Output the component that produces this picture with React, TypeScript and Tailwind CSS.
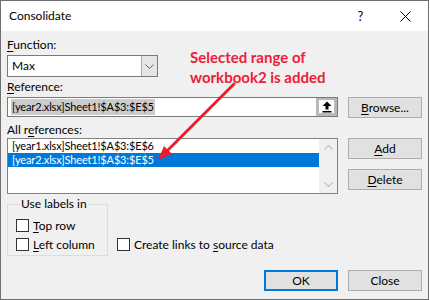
import type { ReactNode } from 'react'

function Key({ children }: { children: ReactNode }) {
  return <span className="underline decoration-1 underline-offset-2">{children}</span>
}

function Button({ children, isDefault = false }: { children: ReactNode; isDefault?: boolean }) {
  return (
    <div
      className={
        isDefault
          ? 'flex h-[21px] w-[74px] items-center justify-center border-2 border-[#0078d7] bg-[#e1e1e1]'
          : 'flex h-[21px] w-[74px] items-center justify-center border border-[#adadad] bg-[#e1e1e1]'
      }
    >
      {children}
    </div>
  )
}

function CheckRow({ children }: { children: ReactNode }) {
  return (
    <div className="flex h-[19px] items-center gap-[4px] whitespace-nowrap">
      <div className="h-[13px] w-[13px] border border-[#333333] bg-white" />
      <span>{children}</span>
    </div>
  )
}

function ChevronDown() {
  return (
    <svg width="9" height="5" viewBox="0 0 9 5" fill="none" stroke="#606060" strokeWidth="1">
      <path d="M0.5 0.5 L4.5 4.5 L8.5 0.5" />
    </svg>
  )
}

function CollapseIcon() {
  return (
    <svg width="10" height="12" viewBox="0 0 10 12" fill="#000">
      <path d="M5 0.5 L9.5 5 L6.5 5 L6.5 8.5 L3.5 8.5 L3.5 5 L0.5 5 Z" />
      <rect x="0.5" y="10" width="9" height="1.5" />
    </svg>
  )
}

export default function App() {
  return (
    <div className="relative h-[300px] w-[429px] overflow-hidden border border-[#6f6f6f] bg-[#f0f0f0] font-['Lato',sans-serif] text-[12px] leading-[16px] text-black">
      {/* title bar */}
      <div className="flex h-[30px] items-center bg-white pl-[8px]">
        <span className="flex-1">Consolidate</span>
        <span className="w-[45px] text-center text-[13px]">?</span>
        <div className="flex w-[45px] justify-center">
          <svg width="11" height="11" viewBox="0 0 11 11" stroke="#000" strokeWidth="1">
            <path d="M0.5 0.5 L10.5 10.5 M10.5 0.5 L0.5 10.5" />
          </svg>
        </div>
      </div>

      <div className="px-[6px]">
        <div className="mt-[6px] h-[16px]">
          <Key>F</Key>unction:
        </div>
        <div className="mt-[2px] flex h-[22px] w-[151px] border border-[#7a7a7a] bg-white">
          <div className="flex flex-1 items-center pl-[4px]">Max</div>
          <div className="flex w-[16px] items-center justify-center border-l border-[#adadad] bg-[#e5e5e5]">
            <ChevronDown />
          </div>
        </div>

        <div className="mt-[2px] h-[16px]">
          <Key>R</Key>eference:
        </div>
        <div className="mt-[2px] flex gap-[10px]">
          <div className="flex h-[20px] w-[331px] border border-[#7a7a7a] bg-white">
            <div className="flex flex-1 items-center pl-[3px] text-[11px] tracking-[-0.15px]">
              <span className="bg-[#cccccc] px-[1px]">[year2.xlsx]Sheet1!$A$3:$E$5</span>
            </div>
            <div className="flex w-[21px] items-center justify-center border-[3px] border-t-2 border-[#b9b9b9] bg-white">
              <CollapseIcon />
            </div>
          </div>
          <Button>
            <span>
              <Key>B</Key>rowse...
            </span>
          </Button>
        </div>

        <div className="mt-[4px] h-[16px]">
          All r<Key>e</Key>ferences:
        </div>
        <div className="flex gap-[10px]">
          <div className="flex h-[56px] w-[331px] border border-[#828282] bg-white">
            <div className="flex-1 text-[11px] tracking-[-0.15px]">
              <div className="flex h-[14px] items-center pl-[4px]">[year1.xlsx]Sheet1!$A$3:$E$6</div>
              <div className="flex h-[14px] items-center bg-[#0078d7] pl-[4px] text-white">
                [year2.xlsx]Sheet1!$A$3:$E$5
              </div>
            </div>
            <div className="flex w-[18px] flex-col items-center justify-between bg-[#f0f0f0] py-[6px]">
              <svg width="9" height="5" viewBox="0 0 9 5" fill="none" stroke="#c2c2c2" strokeWidth="1.2">
                <path d="M0.5 4.5 L4.5 0.5 L8.5 4.5" />
              </svg>
              <svg width="9" height="5" viewBox="0 0 9 5" fill="none" stroke="#c2c2c2" strokeWidth="1.2">
                <path d="M0.5 0.5 L4.5 4.5 L8.5 0.5" />
              </svg>
            </div>
          </div>
          <div className="flex flex-col gap-[10px]">
            <Button>
              <span>
                <Key>A</Key>dd
              </span>
            </Button>
            <Button>
              <span>
                <Key>D</Key>elete
              </span>
            </Button>
          </div>
        </div>

        <div className="mt-[10px] flex">
          <div className="h-[52px] w-[101px] border border-[#dcdcdc] pl-[8px]">
            <div className="-mt-[9px] ml-[4px] h-[16px] w-fit bg-[#f0f0f0] px-[1px]">Use labels in</div>
            <div className="mt-[4px]">
              <CheckRow>
                <Key>T</Key>op row
              </CheckRow>
              <CheckRow>
                <Key>L</Key>eft column
              </CheckRow>
            </div>
          </div>
          <div className="ml-[9px] mt-[31px]">
            <CheckRow>
              Create links to <Key>s</Key>ource data
            </CheckRow>
          </div>
        </div>

        <div className="mt-[14px] flex justify-end gap-[10px]">
          <Button isDefault>OK</Button>
          <Button>Close</Button>
        </div>
      </div>

      {/* annotation */}
      <div className="absolute left-[189px] top-[46px] text-[15px] font-bold leading-[20px] text-[#ee1c3a]">
        <div>Selected range of</div>
        <div>workbook2 is added</div>
      </div>
      <svg className="absolute left-0 top-0" width="430" height="300" viewBox="0 0 430 300">
        <path d="M233 83 L164 152" stroke="#e8202a" strokeWidth="3" strokeLinecap="round" />
        <path d="M157 159 L171 153 L163 145 Z" fill="#e8202a" />
      </svg>
    </div>
  )
}
